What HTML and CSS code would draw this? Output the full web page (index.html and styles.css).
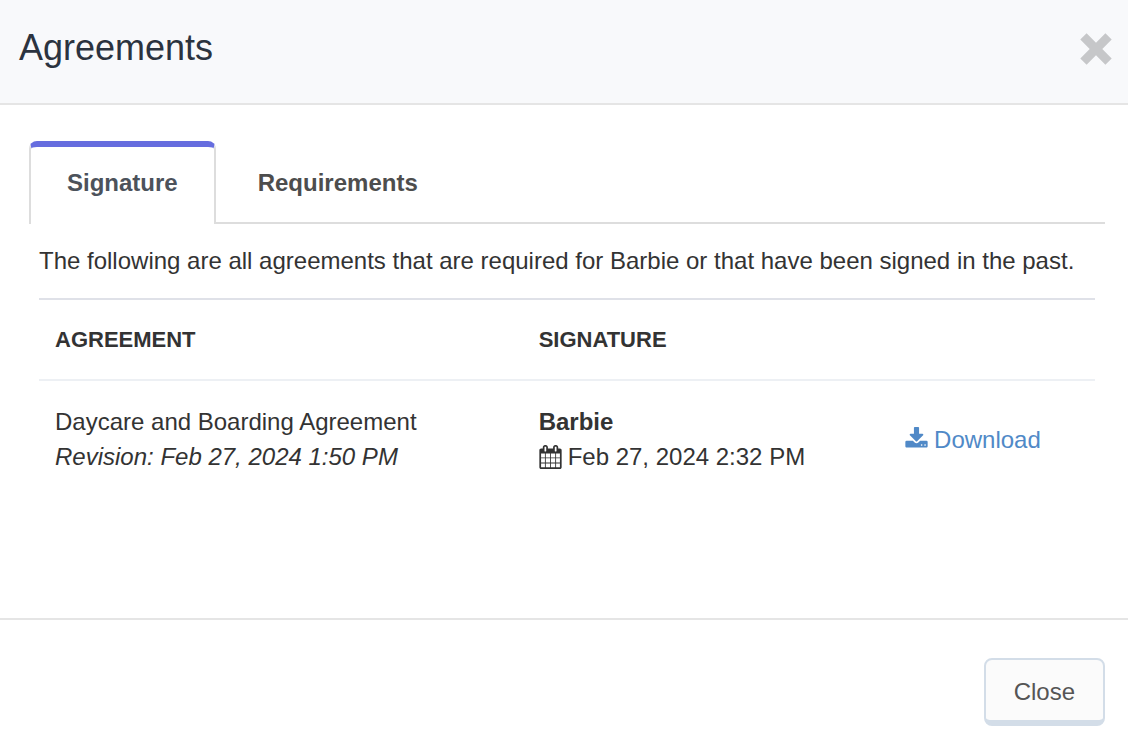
FILE: index.html
```html
<!DOCTYPE html>
<html lang="en">
<head>
<meta charset="utf-8">
<title>Agreements</title>
<link rel="stylesheet" href="styles.css">
</head>
<body>
<div class="modal" role="dialog" aria-labelledby="modal-title">
  <header class="modal-header">
    <h1 class="modal-title" id="modal-title">Agreements</h1>
    <button class="dismiss" type="button" aria-label="Dismiss">
      <svg class="dismiss-icon" viewBox="0 0 32 32" aria-hidden="true"><path d="M6.6 .3 16 9.7 25.4 .3 31.7 6.6 22.3 16 31.7 25.4 25.4 31.7 16 22.3 6.6 31.7 .3 25.4 9.7 16 .3 6.6z"/></svg>
    </button>
  </header>
  <main class="modal-body">
    <div class="tabs" role="tablist">
      <button class="tab tab-active" type="button" role="tab" aria-selected="true" id="tab-signature" aria-controls="panel-signature">Signature</button>
      <button class="tab" type="button" role="tab" aria-selected="false">Requirements</button>
    </div>
    <section class="panel" role="tabpanel" id="panel-signature" aria-labelledby="tab-signature">
      <p class="intro">The following are all agreements that are required for Barbie or that have been signed in the past.</p>
      <table class="agreements">
        <colgroup><col class="col-agreement"><col class="col-signature"><col></colgroup>
        <thead>
          <tr><th scope="col">AGREEMENT</th><th scope="col">SIGNATURE</th><td></td></tr>
        </thead>
        <tbody>
          <tr>
            <td>Daycare and Boarding Agreement<br><em>Revision: Feb 27, 2024 1:50 PM</em></td>
            <td>
              <strong>Barbie</strong>
              <div class="icon-line">
                <svg class="icon" viewBox="64 0 1664 1792" aria-hidden="true"><path d="M192 1664h288v-288h-288v288zm352 0h320v-288h-320v288zm-352-352h288v-320h-288v320zm352 0h320v-320h-320v320zm-352-384h288v-288h-288v288zm736 736h320v-288h-320v288zm-384-736h320v-288h-320v288zm768 736h288v-288h-288v288zm-384-352h320v-320h-320v320zm-352-864v-288q0-13-9.5-22.5t-22.5-9.5h-64q-13 0-22.5 9.5t-9.5 22.5v288q0 13 9.5 22.5t22.5 9.5h64q13 0 22.5-9.5t9.5-22.5zm736 864h288v-320h-288v320zm-384-384h320v-288h-320v288zm384 0h288v-288h-288v288zm32-480v-288q0-13-9.5-22.5t-22.5-9.5h-64q-13 0-22.5 9.5t-9.5 22.5v288q0 13 9.5 22.5t22.5 9.5h64q13 0 22.5-9.5t9.5-22.5zm384-64v1280q0 52-38 90t-90 38h-1408q-52 0-90-38t-38-90v-1280q0-52 38-90t90-38h128v-96q0-66 47-113t113-47h64q66 0 113 47t47 113v96h384v-96q0-66 47-113t113-47h64q66 0 113 47t47 113v96h128q52 0 90 38t38 90z"/></svg>
                <span>Feb 27, 2024 2:32 PM</span>
              </div>
            </td>
            <td>
              <a class="icon-line download" href="#">
                <svg class="icon" viewBox="64 0 1664 1792" aria-hidden="true"><path d="M1344 1344q0-26-19-45t-45-19-45 19-19 45 19 45 45 19 45-19 19-45zm256 0q0-26-19-45t-45-19-45 19-19 45 19 45 45 19 45-19 19-45zm128-224v320q0 40-28 68t-68 28h-1472q-40 0-68-28t-28-68v-320q0-40 28-68t68-28h465l135 136q58 56 136 56t136-56l136-136h464q40 0 68 28t28 68zm-325-569q17 41-14 70l-448 448q-18 19-45 19t-45-19l-448-448q-31-29-14-70 17-39 59-39h256v-448q0-26 19-45t45-19h256q26 0 45 19t19 45v448h256q42 0 59 39z"/></svg>
                <span>Download</span>
              </a>
            </td>
          </tr>
        </tbody>
      </table>
    </section>
  </main>
  <footer class="modal-footer">
    <button class="close-button" type="button">Close</button>
  </footer>
</div>
</body>
</html>
```
FILE: styles.css
```css
* {
  box-sizing: border-box;
}

body {
  margin: 0;
  background: #fff;
  color: #333;
  font: 24px/35px "Liberation Sans", Arial, sans-serif;
}

button {
  font: inherit;
  cursor: pointer;
}

.modal {
  display: flex;
  flex-direction: column;
  min-height: 100vh;
}

.modal-header {
  display: flex;
  align-items: flex-start;
  justify-content: space-between;
  padding: 28px 16px 35px 19px;
  background: #f8f9fb;
  border-bottom: 2px solid #e5e5e5;
}

.modal-title {
  margin: 0;
  color: #2b333f;
  font-size: 36px;
  font-weight: 400;
  line-height: 40px;
}

.dismiss {
  display: flex;
  padding: 5px 0 0;
  border: 0;
  background: none;
}

.dismiss-icon {
  width: 32px;
  height: 32px;
  fill: #c6c7c9;
}

.modal-body {
  flex: 1;
  padding: 36px 23px 24px 29px;
}

.tabs {
  display: flex;
  gap: 4px;
  border-bottom: 2px solid #ddd;
}

.tab {
  margin-bottom: -2px;
  padding: 18px 36px 24px;
  border: 2px solid transparent;
  border-top-width: 6px;
  border-bottom: 0;
  border-radius: 8px 8px 0 0;
  background: none;
  color: #4d4d4d;
  font-weight: 700;
}

.tab-active {
  border-color: #ddd;
  border-top-color: #666ddf;
  background: #fff;
  color: #4c525b;
}

.panel {
  padding: 19px 10px 0;
}

.intro {
  margin: 0 0 20px;
}

.agreements {
  width: 100%;
  table-layout: fixed;
  border-spacing: 0;
  border-top: 2px solid #dfe1e8;
}

.col-agreement {
  width: 45.8%;
}

.col-signature {
  width: 34.7%;
}

.agreements th {
  padding: 22px 16px;
  font-size: 22px;
  text-align: left;
}

.agreements thead th,
.agreements thead td {
  border-bottom: 2px solid #edf0f4;
}

.agreements tbody td {
  padding: 23px 16px;
  vertical-align: middle;
}

.icon-line {
  display: flex;
  align-items: center;
  gap: 6px;
}

.icon {
  width: 23px;
  height: 24px;
  fill: currentColor;
}

.download {
  color: #5089c7;
  text-decoration: none;
}

.modal-footer {
  display: flex;
  justify-content: flex-end;
  padding: 38px 23px 18px;
  border-top: 2px solid #e5e5e5;
}

.close-button {
  padding: 14px 28px 11px;
  border: 2px solid #d3dde8;
  border-bottom-width: 6px;
  border-radius: 8px;
  background: #fbfbfb;
  color: #555;
}
```
